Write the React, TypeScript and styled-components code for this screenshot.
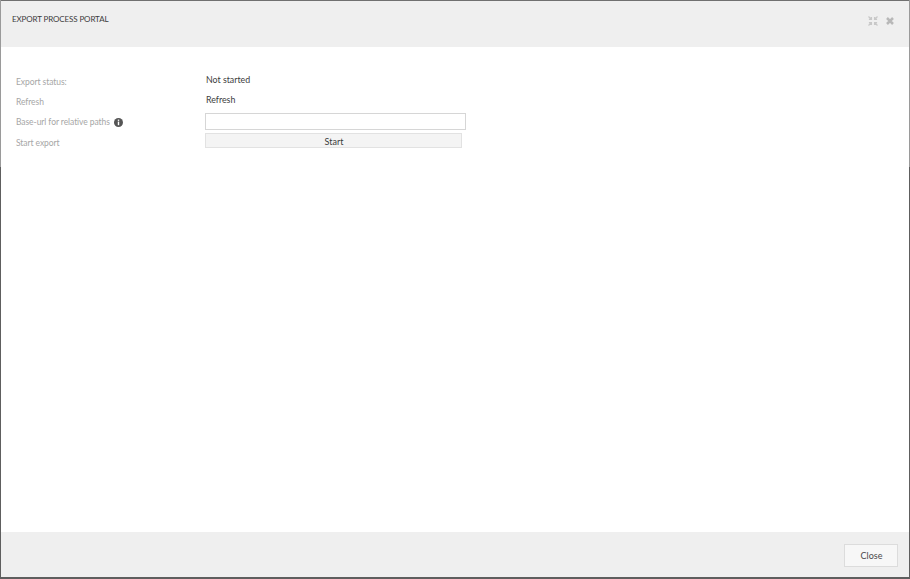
import styled, { createGlobalStyle } from 'styled-components';

const GlobalStyle = createGlobalStyle`
  html, body {
    margin: 0;
    padding: 0;
    background: #5e5e5e;
  }
  body {
    font-family: Lato, "Open Sans", "Liberation Sans", sans-serif;
  }
`;

// the window behind the dialog shows through as a lighter edge above y=167
const Frame = styled.div`
  width: 910px;
  height: 579px;
  box-sizing: border-box;
  padding: 0 1px 2px 1px;
  background: linear-gradient(#9a9a9a 0 167px, #5e5e5e 167px);
`;

const Dialog = styled.div`
  height: 100%;
  box-sizing: border-box;
  display: flex;
  flex-direction: column;
  border-top: 1px solid #707070;
  background: #fff;
`;

const Header = styled.header`
  height: 46px;
  flex: none;
  box-sizing: border-box;
  padding: 12px 15px 0 11px;
  display: flex;
  justify-content: space-between;
  align-items: flex-start;
  background: #efefef;
`;

const Title = styled.h2`
  margin: 0;
  font-size: 8px;
  line-height: 12px;
  letter-spacing: -0.12px;
  font-weight: 400;
  color: #3c3c3c;
`;

const HeaderIcons = styled.div`
  display: flex;
  align-items: center;
  gap: 8px;
  margin-top: 3px;
`;

const Body = styled.main`
  flex: 1;
  padding: 23px 0 0 15px;
`;

const Row = styled.div<{ $height: number }>`
  display: grid;
  grid-template-columns: 189px 261px;
  align-items: start;
  height: ${(props) => props.$height}px;
`;

const Label = styled.label`
  display: flex;
  align-items: center;
  gap: 4px;
  margin-top: 6px;
  font-size: 8.5px;
  line-height: 12px;
  letter-spacing: -0.07px;
  color: #a6a6a6;
`;

const Value = styled.span`
  margin-top: 4px;
  padding-left: 1px;
  font-size: 8.8px;
  line-height: 12px;
  color: #3c3c3c;
`;

const TextInput = styled.input`
  box-sizing: border-box;
  width: 261px;
  height: 17px;
  margin-top: 3px;
  padding: 0 4px;
  border: 1px solid #d6d6d6;
  background: #fff;
`;

const StartButton = styled.button`
  width: 257px;
  height: 15px;
  margin-top: 2px;
  padding: 1px 0 0 1px;
  border: 1px solid #e2e2e2;
  background: #f4f4f4;
  font-family: inherit;
  font-size: 9px;
  color: #3c3c3c;
`;

const Footer = styled.footer`
  height: 45px;
  flex: none;
  box-sizing: border-box;
  padding: 0 11px 10px 0;
  display: flex;
  justify-content: flex-end;
  align-items: flex-end;
  background: #efefef;
`;

const CloseButton = styled.button`
  width: 54px;
  height: 23px;
  padding: 0 0 0 1px;
  border: 1px solid #dcdcdc;
  background: #f7f7f7;
  font-family: inherit;
  font-size: 9px;
  color: #4a4a4a;
`;

const InfoIcon = () => (
  <svg width="9" height="9" viewBox="0 0 9 9" aria-hidden="true">
    <circle cx="4.5" cy="4.5" r="4.5" fill="#555" />
    <rect x="3.8" y="1.6" width="1.4" height="1.3" fill="#fff" />
    <rect x="3.8" y="3.6" width="1.4" height="3.6" fill="#fff" />
  </svg>
);

const ExpandIcon = () => (
  <svg width="10" height="10" viewBox="0 0 10 10" aria-hidden="true">
    <g stroke="#c8c8c8" strokeWidth="1.3" fill="none">
      <path d="M0.5 0.5 L3 3 M3.4 0.9 V3.4 H0.9" />
      <path d="M9.5 0.5 L7 3 M6.6 0.9 V3.4 H9.1" />
      <path d="M0.5 9.5 L3 7 M3.4 9.1 V6.6 H0.9" />
      <path d="M9.5 9.5 L7 7 M6.6 9.1 V6.6 H9.1" />
    </g>
  </svg>
);

const CloseIcon = () => (
  <svg width="8" height="8" viewBox="0 0 8 8" aria-hidden="true">
    <path d="M1 1 L7 7 M7 1 L1 7" stroke="#b8b8b8" strokeWidth="2.5" />
  </svg>
);

export default function App() {
  return (
    <>
      <GlobalStyle />
      <Frame>
        <Dialog>
          <Header>
            <Title>EXPORT PROCESS PORTAL</Title>
            <HeaderIcons>
              <ExpandIcon />
              <CloseIcon />
            </HeaderIcons>
          </Header>
          <Body>
            <Row $height={20}>
              <Label>Export status:</Label>
              <Value>Not started</Value>
            </Row>
            <Row $height={20}>
              <Label>Refresh</Label>
              <Value>Refresh</Value>
            </Row>
            <Row $height={21}>
              <Label>
                Base-url for relative paths
                <InfoIcon />
              </Label>
              <TextInput />
            </Row>
            <Row $height={20}>
              <Label>Start export</Label>
              <StartButton>Start</StartButton>
            </Row>
          </Body>
          <Footer>
            <CloseButton>Close</CloseButton>
          </Footer>
        </Dialog>
      </Frame>
    </>
  );
}
